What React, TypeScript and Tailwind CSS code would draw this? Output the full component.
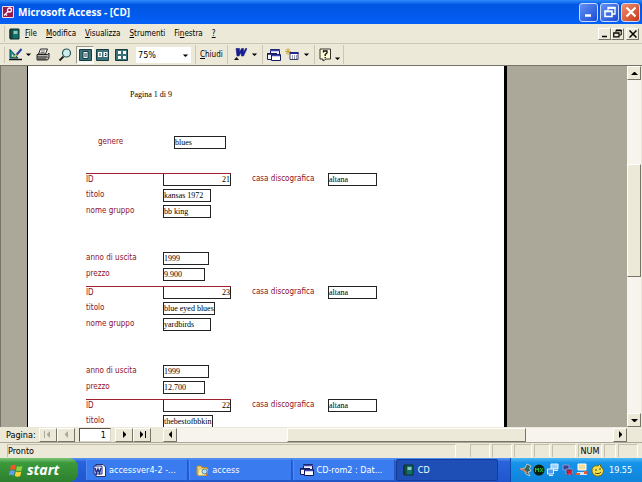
import React from 'react';
import clsx from 'clsx';

const menus = [
  { key: 'F', before: '', after: 'ile' },
  { key: 'M', before: '', after: 'odifica' },
  { key: 'V', before: '', after: 'isualizza' },
  { key: 'S', before: '', after: 'trumenti' },
  { key: 'n', before: 'Fi', after: 'estra' },
  { key: '?', before: '', after: '' },
];

type Cd = {
  id: string;
  titolo: string;
  casa: string;
  gruppo?: string;
  anno?: string;
  prezzo?: string;
};

const genere = 'blues';

const records: Cd[] = [
  { id: '21', titolo: 'kansas 1972', gruppo: 'bb king', casa: 'altana', anno: '1999', prezzo: '9.900' },
  { id: '23', titolo: 'blue eyed blues', gruppo: 'yardbirds', casa: 'altana', anno: '1999', prezzo: '12.700' },
  { id: '22', titolo: 'thebestofbbkin', casa: 'altana' },
];

const raised =
  'border border-t-white border-l-white border-r-[#77756a] border-b-[#77756a] bg-[#ece9d8]';

function Arrow({ dir, className }: { dir: 'up' | 'down' | 'left' | 'right'; className?: string }) {
  const points = {
    up: '0,5 3,2 4,2 7,5',
    down: '0,2 7,2 4,5 3,5',
    left: '5,0 2,3 2,4 5,7',
    right: '2,0 5,3 5,4 2,7',
  };
  return (
    <svg viewBox="0 0 7 7" className={clsx('h-[7px] w-[7px] shrink-0 fill-current', className)}>
      <polygon points={points[dir]} />
    </svg>
  );
}

function ReportIcon({ className }: { className?: string }) {
  return (
    <svg viewBox="0 0 12 12" className={clsx('h-3 w-3 shrink-0', className)}>
      <path d="M1 1h9v10H1z" fill="#0b7468" stroke="#12292a" />
      <path d="M3 1v10" stroke="#12292a" />
      <path d="M4.500 3h4v3h-4z" fill="#8fc6bb" />
      <path d="M0 3h2M0 5h2M0 7h2M0 9h2" stroke="#222" />
    </svg>
  );
}

function WordDoc() {
  return (
    <svg viewBox="0 0 13 13" className="h-[13px] w-[13px] shrink-0">
      <path d="M3 .5h7l2.500 2.500v9.500H3z" fill="#fff" stroke="#27336f" />
      <path d="M1 2h8v8H1z" fill="#e8ecff" stroke="#1c2c86" />
      <path d="M2 4l1.500 5L5 5l1.500 4L8 4" fill="none" stroke="#1c2c86" strokeWidth="1.400" />
    </svg>
  );
}

function FolderIcon() {
  return (
    <svg viewBox="0 0 13 13" className="h-[13px] w-[13px] shrink-0">
      <path d="M1 2h4l1 1.500h5V11H1z" fill="#f6d772" stroke="#b98a23" />
      <path d="M3 5h9l-1.500 6.500H2z" fill="#fff0a8" stroke="#c99b34" strokeWidth=".6" />
      <circle cx="8.500" cy="7.500" r="2.500" fill="#bfe0f6" stroke="#4f86b8" />
      <path d="M10 9.500l2 2.500" stroke="#c0692a" strokeWidth="1.500" />
    </svg>
  );
}

function DbWindow() {
  return (
    <svg viewBox="0 0 14 12" className="h-3 w-3.5 shrink-0">
      <path d="M3.500.5h9v7h-9z" fill="#f4f4ff" stroke="#15195e" />
      <path d="M3 1.500h10" stroke="#3c49a8" strokeWidth="1.500" />
      <path d="M.5 4.500h9v6h-9z" fill="#f4f4ff" stroke="#15195e" />
      <path d="M0 5h10" stroke="#15195e" strokeWidth="1.500" />
      <path d="M4.500 5.500h9v6h-9z" fill="#fff" stroke="#15195e" />
      <path d="M5 6.500h8" stroke="#3c49a8" strokeWidth="1.500" />
    </svg>
  );
}

function RestoreIcon({ className }: { className?: string }) {
  return (
    <svg viewBox="0 0 12 12" className={clsx('fill-none stroke-current', className)}>
      <path d="M4 4V1.500h7V8H8" strokeWidth="1.300" />
      <path d="M4 2h7.500" strokeWidth="2" />
      <path d="M1 5h7v5.500H1zM1 5.500h7" strokeWidth="1.600" />
    </svg>
  );
}

function Separator() {
  return <span className="mx-1 h-[19px] w-px shrink-0 bg-[#cbc7b4]" />;
}

function TitleBar() {
  const btn =
    'flex h-[19px] w-[19px] items-center justify-center rounded-[3px] border border-[#c9dbff] text-white';
  return (
    <header className="flex h-6 shrink-0 items-center bg-linear-to-b from-[#2f8bfb] via-[#0055e2] via-20% to-[#0560f8] px-0.5">
      <svg viewBox="0 0 12 12" className="h-3 w-3 shrink-0">
        <path d="M.5.5h11v11H.5z" fill="#98194d" stroke="#eedbe4" />
        <circle cx="7.500" cy="4" r="2" fill="none" stroke="#fff" strokeWidth="1.300" />
        <path d="M6 5.500L2 9.500M3.500 8l1.500 1.500" stroke="#fff" strokeWidth="1.300" />
      </svg>
      <h1 className="ml-1 flex-1 font-['Open_Sans','Noto_Sans',sans-serif] text-[10px] font-bold text-white">
        Microsoft Access - [CD]
      </h1>
      <div className="flex gap-0.5">
        <button aria-label="Riduci a icona" className={clsx(btn, 'bg-linear-to-br from-[#6490f5] to-[#1b49d2]')}>
          <svg viewBox="0 0 12 12" className="h-3 w-3">
            <path d="M2 9.500h6" stroke="#fff" strokeWidth="2.500" />
          </svg>
        </button>
        <button aria-label="Ripristina" className={clsx(btn, 'bg-linear-to-br from-[#6490f5] to-[#1b49d2]')}>
          <RestoreIcon className="h-3 w-3" />
        </button>
        <button aria-label="Chiudi Access" className={clsx(btn, 'bg-linear-to-br from-[#ef8c6b] to-[#c9330d]')}>
          <svg viewBox="0 0 12 12" className="h-3 w-3">
            <path d="M1.500 1.500l9 9M10.500 1.500l-9 9" stroke="#fff" strokeWidth="2.200" />
          </svg>
        </button>
      </div>
    </header>
  );
}

function MenuBar() {
  const btn = clsx(raised, 'flex h-3 w-[13px] items-center justify-center');
  return (
    <nav className="flex h-5 shrink-0 items-center border-b border-[#cbc7b4] pr-[3px] pl-1">
      <span className="h-4 w-px bg-[#cbc7b4]" />
      <ReportIcon className="ml-1" />
      <ul className="ml-1 flex flex-1 gap-[9px] text-[8px]">
        {menus.map((m) => (
          <li key={m.key}>
            <button className="block leading-3">
              {m.before}
              <u>{m.key}</u>
              {m.after}
            </button>
          </li>
        ))}
      </ul>
      <button aria-label="Riduci finestra" className={btn}>
        <svg viewBox="0 0 8 8" className="h-2 w-2">
          <path d="M1 6.500h5" stroke="#000" strokeWidth="1.500" />
        </svg>
      </button>
      <button aria-label="Ripristina finestra" className={btn}>
        <RestoreIcon className="h-[9px] w-[9px]" />
      </button>
      <button aria-label="Chiudi finestra" className={clsx(btn, 'ml-0.5')}>
        <svg viewBox="0 0 8 8" className="h-2 w-2">
          <path d="M.5.5l7 7M7.500.5l-7 7" stroke="#000" strokeWidth="1.500" />
        </svg>
      </button>
    </nav>
  );
}

function Toolbar() {
  const tool = 'flex h-[18px] shrink-0 items-center justify-center';
  return (
    <div role="toolbar" className="flex h-[21px] shrink-0 items-center pl-1">
      <span className="h-4 w-px bg-[#cbc7b4]" />
      <button aria-label="Visualizza" className={clsx(tool, 'ml-1')}>
        <svg viewBox="0 0 14 13" className="h-[13px] w-3.5">
          <path d="M1 1.500l8 8.500H1z" fill="#18a09b" stroke="#0c3d4e" />
          <path d="M3 6v2.500h2z" fill="#ece9d8" />
          <path d="M12.500 1L7 7.500" stroke="#23439b" strokeWidth="2" />
          <path d="M7.500 6.500L5.500 9" stroke="#eebf3d" strokeWidth="1.500" />
          <path d="M0 11.500h13" stroke="#111" strokeWidth="1.500" />
        </svg>
        <Arrow dir="down" className="ml-0.5 scale-75" />
      </button>
      <button aria-label="Stampa" className={clsx(tool, 'ml-1')}>
        <svg viewBox="0 0 14 13" className="h-[13px] w-3.5">
          <path d="M4.500 1h7L9.500 6h-7z" fill="#fff" stroke="#222" />
          <path d="M5 3h4M4.500 4.500h4" stroke="#777" />
          <path d="M1 6.500h10.500L13 5v5l-1.500 2H1z" fill="#b8b6ad" stroke="#222" />
          <path d="M1 9h10.500M2 11h8" stroke="#222" />
        </svg>
      </button>
      <button aria-label="Zoom" className={clsx(tool, 'ml-2')}>
        <svg viewBox="0 0 14 14" className="h-3.5 w-3.5">
          <circle cx="8.500" cy="5" r="4" fill="#cdeceb" stroke="#28545a" strokeWidth="1.200" />
          <path d="M5.500 8.500L1.500 12.500" stroke="#222" strokeWidth="2" />
        </svg>
      </button>
      <button
        aria-label="Una pagina"
        className={clsx(
          tool,
          'ml-1 w-[18px] border border-t-[#99968a] border-r-white border-b-white border-l-[#99968a] bg-[#f8f7f1]',
        )}
      >
        <svg viewBox="0 0 13 12" className="h-3 w-[13px]">
          <path d="M.5.5h12v11H.5z" fill="#3b7279" stroke="#163b43" />
          <path d="M4 2.500h5v7H4z" fill="#fff" stroke="#163b43" />
          <path d="M5 5h3M5 7h3" stroke="#163b43" />
        </svg>
      </button>
      <button aria-label="Due pagine" className={clsx(tool, 'ml-0.5')}>
        <svg viewBox="0 0 13 12" className="h-3 w-[13px]">
          <path d="M.5.5h12v11H.5z" fill="#3b7279" stroke="#163b43" />
          <path d="M2 3h4v5H2zM7.500 3h4v5h-4z" fill="#fff" />
          <path d="M4 4v3M9 4.500h1v1L9 6.500h1.500" fill="none" stroke="#163b43" />
        </svg>
      </button>
      <button aria-label="Più pagine" className={clsx(tool, 'ml-1.5')}>
        <svg viewBox="0 0 13 12" className="h-3 w-[13px]">
          <path d="M.5.5h12v11H.5z" fill="#3b7279" stroke="#163b43" />
          <path d="M3 2h3v3H3zM8 2h3v3H8zM3 7h3v3H3zM8 7h3v3H8z" fill="#fff" />
        </svg>
      </button>
      <div className="relative ml-2">
        <select
          aria-label="Percentuale zoom"
          className="block h-4 w-[55px] appearance-none bg-white pl-0.5 leading-4"
          defaultValue="75%"
        >
          <option>100%</option>
          <option>75%</option>
          <option>50%</option>
        </select>
        <Arrow dir="down" className="pointer-events-none absolute top-[5px] right-0.5 scale-75" />
      </div>
      <Separator />
      <button className={clsx(tool, 'text-[8px]')}>
        <span>
          <u>C</u>hiudi
        </span>
      </button>
      <Separator />
      <button aria-label="OfficeLinks" className={clsx(tool, 'ml-0.5')}>
        <svg viewBox="0 0 13 13" className="h-[13px] w-[13px]">
          <path
            d="M2 .5h3.500l0 4 2-4h2l0 4 2-4h1.500L9.500 8h-2L7 4.500 5 8H3z"
            fill="#161d8e"
            stroke="#161d8e"
            strokeWidth=".6"
          />
          <path d="M0 12l2.500-3L5 12z" fill="#111" />
        </svg>
        <Arrow dir="down" className="ml-1 scale-75" />
      </button>
      <Separator />
      <button aria-label="Finestra database" className={tool}>
        <DbWindow />
      </button>
      <button aria-label="Nuovo oggetto" className={clsx(tool, 'ml-1')}>
        <svg viewBox="0 0 14 13" className="h-[13px] w-3.5">
          <path d="M5 4.500h8v7H5z" fill="#fff" stroke="#39396c" />
          <path d="M4.500 5h9" stroke="#24248a" strokeWidth="2" />
          <path d="M7 8h1M9 8h1M11 8h1M7 10h1M9 10h1M11 10h1" stroke="#39396c" />
          <path d="M3 0v7M0 3.500h6M1 1l4 5M5 1L1 6" stroke="#c79d24" strokeWidth=".8" />
        </svg>
        <Arrow dir="down" className="ml-1 scale-75" />
      </button>
      <Separator />
      <button aria-label="Guida" className={tool}>
        <svg viewBox="0 0 13 14" className="h-3.5 w-[13px]">
          <path d="M1 1h10.500v10H7l-3 2v-2H1z" fill="#fffbd2" stroke="#333" />
          <path d="M4.500 4.500V3h3.500v2L6.200 6.500V8M6.200 9v1.200" fill="none" stroke="#111" strokeWidth="1.300" />
        </svg>
      </button>
      <span className="flex h-[19px] items-end border-r border-[#cbc7b4] pr-0.5 pb-0.5 pl-0.5">
        <Arrow dir="down" className="scale-75" />
      </span>
    </div>
  );
}

function Value({ children, className }: { children: React.ReactNode; className: string }) {
  return (
    <dd
      className={clsx(
        "shrink-0 border-[#222] font-['Liberation_Serif',serif] leading-[11px] whitespace-nowrap text-black",
        className,
      )}
    >
      {children}
    </dd>
  );
}

function Field({ label, value, width }: { label: string; value?: string; width: string }) {
  if (!value) return null;
  return (
    <div className="flex h-4 items-start">
      <dt className="w-[77px] shrink-0 leading-3">{label}</dt>
      <Value className={clsx('border', width)}>{value}</Value>
    </div>
  );
}

function Record({ r }: { r: Cd }) {
  return (
    <dl className="ml-[58px] pb-0.5">
      <div className="flex h-4 items-start">
        <div className="flex w-[145px] shrink-0 border-t border-[#a02030]">
          <dt className="w-[77px] leading-[11px]">ID</dt>
          <Value className="w-[68px] border-x border-b text-right">{r.id}</Value>
        </div>
        <dt className="ml-[21px] w-[76px] shrink-0 leading-3 whitespace-nowrap">casa discografica</dt>
        <Value className="w-[49px] border">{r.casa}</Value>
      </div>
      <Field label="titolo" value={r.titolo} width="min-w-12" />
      <Field label="nome gruppo" value={r.gruppo} width="min-w-12" />
      <div className="mt-[31px]">
        <Field label="anno di uscita" value={r.anno} width="w-[46px]" />
        <Field label="prezzo" value={r.prezzo} width="w-[42px]" />
      </div>
    </dl>
  );
}

function Report() {
  return (
    <div className="min-w-0 flex-1 overflow-hidden border-l border-[#77756a] bg-[#aca899] pl-[26px]">
      <article className="h-full w-[480px] overflow-hidden border-r-[3px] border-l border-black bg-white pt-[23px] font-['DejaVu_Sans_Condensed','DejaVu_Sans',sans-serif] text-[8px] text-[#8e1026]">
        <p className="ml-[102px] font-['Liberation_Serif',serif] leading-3 text-black">Pagina 1 di 9</p>
        <dl className="mt-[35px] mb-6 ml-[70px] flex">
          <dt className="w-[76px] leading-3">genere</dt>
          <Value className="w-[52px] border">{genere}</Value>
        </dl>
        {records.map((r) => (
          <Record key={r.id} r={r} />
        ))}
      </article>
    </div>
  );
}

function VerticalScroll() {
  const btn = clsx(raised, 'flex h-[14px] shrink-0 items-center justify-center');
  return (
    <div className="mr-px flex w-3.5 shrink-0 flex-col bg-[#f6f4ec]">
      <button aria-label="Scorri su" className={btn}>
        <Arrow dir="up" />
      </button>
      <div className="flex flex-1 flex-col">
        <div className="flex-[85]" />
        <div className={clsx(raised, 'flex-[112]')} />
        <div className="flex-[137]" />
      </div>
      <button aria-label="Scorri giù" className={btn}>
        <Arrow dir="down" />
      </button>
    </div>
  );
}

function PageNav() {
  const btn = clsx(raised, 'flex h-3.5 shrink-0 items-center justify-center');
  return (
    <div className="flex h-4 shrink-0 items-center border-b border-[#aca899] pr-[15px] pl-1.5">
      <label htmlFor="pagina" className="w-[33px]">
        Pagina:
      </label>
      <button aria-label="Prima pagina" disabled className={clsx(btn, 'w-[18px] text-[#aca899]')}>
        <span className="h-[7px] w-px bg-current" />
        <Arrow dir="left" />
      </button>
      <button aria-label="Pagina precedente" disabled className={clsx(btn, 'w-[18px] text-[#aca899]')}>
        <Arrow dir="left" />
      </button>
      <input
        id="pagina"
        defaultValue="1"
        className="mx-1 h-3.5 w-8 border border-[#d8d4c4] border-t-[#55534a] border-l-[#55534a] bg-white pr-1 text-right leading-3"
      />
      <button aria-label="Pagina successiva" className={clsx(btn, 'w-[18px]')}>
        <Arrow dir="right" />
      </button>
      <button aria-label="Ultima pagina" className={clsx(btn, 'w-[18px]')}>
        <Arrow dir="right" />
        <span className="h-[7px] w-px bg-current" />
      </button>
      <div className="ml-3 flex h-3.5 flex-1 bg-[#f6f4ec]">
        <button aria-label="Scorri a sinistra" className={clsx(btn, 'w-3.5')}>
          <Arrow dir="left" />
        </button>
        <div className="flex flex-1">
          <div className="flex-[111]" />
          <div className={clsx(raised, 'flex-[238]')} />
          <div className="flex-[87]" />
        </div>
        <button aria-label="Scorri a destra" className={clsx(btn, 'w-3.5')}>
          <Arrow dir="right" />
        </button>
      </div>
    </div>
  );
}

function StatusBar() {
  const cell = 'h-[13px] border-t border-l border-[#c4c0ae] border-r border-r-white';
  return (
    <footer className="flex h-[15px] shrink-0 items-center gap-0.5 pr-1 pl-[7px]">
      <span className={clsx(cell, 'flex-1 leading-3')}>Pronto</span>
      <span className={clsx(cell, 'ml-3 w-5')} />
      <span className={clsx(cell, 'w-5')} />
      <span className={clsx(cell, 'w-[18px]')} />
      <span className={clsx(cell, 'w-4')} />
      <span className={clsx(cell, 'w-6')} />
      <span className={clsx(cell, 'w-6 text-center leading-3')}>NUM</span>
      <span className={clsx(cell, 'w-3')} />
      <span className={clsx(cell, 'w-5')} />
    </footer>
  );
}

function TrayIcons() {
  return (
    <svg viewBox="0 0 86 14" className="h-3.5 w-[86px] shrink-0">
      <path d="M1 6l5-1 2-4 4 2-1.500 2.500L12 8l-3 1 2 4-4-2-2-4z" fill="#3c665b" stroke="#d3ddd6" strokeWidth=".8" />
      <path d="M1 6l4 1 3 3" stroke="#d77c55" strokeWidth="1.500" fill="none" />
      <circle cx="20" cy="7" r="5.500" fill="#07200d" />
      <path d="M16.500 9V5l1.500 2 1.500-2v4M21 5l3 4M24 5l-3 4" fill="none" stroke="#2bbd42" />
      <path d="M32 1h7v5h-7z" fill="#9fd1ff" stroke="#e5f2ff" />
      <path d="M28.500 6h6v5h-6z" fill="#4f9bed" stroke="#e5f2ff" />
      <path d="M30 12.500h4M35 7.500h4" stroke="#dcecff" />
      <path d="M44 2h6v5h-6z" fill="#36418f" stroke="#8f97ca" />
      <path d="M47 6h6v5h-6z" fill="#2b3270" stroke="#8f97ca" />
      <path d="M48 7l5 5M53 7l-5 5" stroke="#e0202b" strokeWidth="1.600" />
      <path d="M59 1h8v6h-8z" fill="#f3dd9c" stroke="#fff" />
      <path d="M58 9h10v3H58z" fill="#d9e3f5" />
      <path d="M57 10h4v2h-4zM65 8h3v3h-3z" fill="#e05e38" />
      <path d="M73 7c0-3 3-5 6-4l2-2 1 3c4 2 3 8-2 9-4 1-7-2-7-6z" fill="#f5e04b" stroke="#6d6716" />
      <path d="M76 7h2M80 6h2M76 10c2 1 4 1 6-1" stroke="#49430c" fill="none" />
    </svg>
  );
}

const tasks = [
  { title: 'accessver4-2 -...', icon: <WordDoc /> },
  { title: 'access', icon: <FolderIcon /> },
  { title: 'CD-rom2 : Dat...', icon: <DbWindow /> },
  { title: 'CD', icon: <ReportIcon />, active: true },
];

function Taskbar() {
  return (
    <div className="flex h-6 shrink-0 bg-linear-to-b from-[#5a95f5] via-[#2a63dc] via-15% to-[#2056cd] text-white">
      <button className="flex w-[78px] shrink-0 items-center gap-1 rounded-r-[9px] bg-linear-to-b from-[#7cc47a] via-[#3c9a3b] via-20% to-[#2e7f2e] pl-[9px] font-['Open_Sans','Noto_Sans',sans-serif] text-sm font-bold italic">
        <svg viewBox="0 0 14 14" className="h-3.5 w-3.5 shrink-0">
          <path d="M2 2.500c2-1 3-1 5 0L6 7C4 6 3 6 1 7z" fill="#f0562c" />
          <path d="M8 3c2 1 3 1 5.500 0l-1 4.500C10 8.500 9 8.500 7 7.500z" fill="#8bd33c" />
          <path d="M.800 8c2-1 3-1 5 0l-1 4.500c-2-1-3-1-5 0z" fill="#5d9df5" />
          <path d="M6.800 8.500c2 1 3 1 5.500 0l-1 4.500c-2 1-3.500 1-5.500 0z" fill="#fbd335" />
        </svg>
        start
      </button>
      <div className="ml-2 flex flex-1 gap-px py-px">
        {tasks.map((t) => (
          <button
            key={t.title}
            className={clsx(
              'flex min-w-0 flex-1 items-center gap-[3px] rounded-[2px] border pl-1.5 whitespace-nowrap',
              t.active
                ? 'border-[#153c96] bg-[#1e4fb6]'
                : 'border-t-[#4f8df5] border-r-[#2458c0] border-b-[#2458c0] border-l-[#4f8df5] bg-[#3a7bf0]',
            )}
          >
            {t.icon}
            {t.title}
          </button>
        ))}
      </div>
      <div className="ml-3 flex w-[132px] shrink-0 items-center gap-1 border-l border-[#0c4bb0] bg-linear-to-b from-[#4cb9f5] via-[#1494ea] via-20% to-[#1183da] pl-2">
        <TrayIcons />
        <time>19.55</time>
      </div>
    </div>
  );
}

export default function App() {
  return (
    <div className="flex h-screen flex-col overflow-hidden bg-[#ece9d8] font-['DejaVu_Sans_Condensed','DejaVu_Sans',sans-serif] text-[9px] leading-3 text-black">
      <TitleBar />
      <MenuBar />
      <Toolbar />
      <main className="flex min-h-0 flex-1 border-t border-[#77756a]">
        <Report />
        <VerticalScroll />
      </main>
      <PageNav />
      <StatusBar />
      <Taskbar />
    </div>
  );
}
